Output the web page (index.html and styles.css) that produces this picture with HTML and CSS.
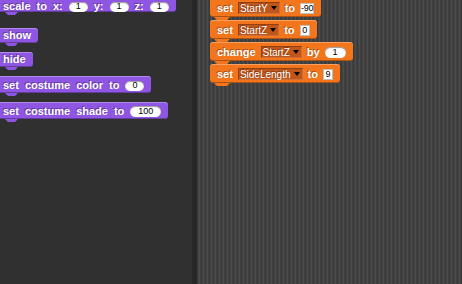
FILE: index.html
```html
<!DOCTYPE html>
<html lang="en">
<head>
  <meta charset="UTF-8" />
  <title>Snap! - Looks and Variables</title>
  <meta name="viewport" content="width=device-width, initial-scale=1.0" />
  <link rel="stylesheet" href="styles.css">
</head>
<body>
  <div class="editor">
    <!-- Palette (Looks) -->
    <div class="palette">
      <div class="block looks tall first">
        <span>scale</span><span>to</span><span>x:</span><span class="num">1</span>
        <span>y:</span><span class="num">1</span>
        <span>z:</span><span class="num">1</span>
      </div>
      <div class="block looks spaced"><span>show</span></div>
      <div class="block looks"><span>hide</span></div>
      <div class="block looks tall">
        <span>set</span><span>costume</span><span>color</span><span>to</span><span class="num">0</span>
      </div>
      <div class="block looks tall">
        <span>set</span><span>costume</span><span>shade</span><span>to</span><span class="num wide">100</span>
      </div>
    </div>

    <div class="divider"></div>

    <!-- Scripting area -->
    <div class="scripts">
      <div class="script">
        <div class="block vars">
          <span>set</span><span class="slot">StartY<i class="arrow"></i></span>
          <span>to</span><span class="box">-90</span>
        </div>
        <div class="block vars">
          <span>set</span><span class="slot">StartZ<i class="arrow"></i></span>
          <span>to</span><span class="box">0</span>
        </div>
        <div class="block vars">
          <span>change</span><span class="slot">StartZ<i class="arrow"></i></span>
          <span>by</span><span class="num wide">1</span>
        </div>
        <div class="block vars">
          <span>set</span><span class="slot">SideLength<i class="arrow"></i></span>
          <span>to</span><span class="box">9</span>
        </div>
      </div>
    </div>
  </div>
</body>
</html>
```

FILE: styles.css
```css
:root {
  --palette: #303030;
  --looks: #8f56e3;
  --vars: #f3761d;
  --vars-slot: #c0561a;
}

body {
  margin: 0;
  font-family: 'Liberation Sans', Arial, sans-serif;
  background-color: var(--palette);
}

.editor {
  display: flex;
  width: 462px;
  height: 284px;
  overflow: hidden;
}

.palette {
  width: 192px;
  flex: none;
  display: flex;
  flex-direction: column;
  align-items: flex-start;
  gap: 9px;
  background-color: var(--palette);
}

.divider {
  width: 5px;
  flex: none;
  background-color: #262626;
}

.scripts {
  flex: 1;
  background: repeating-linear-gradient(90deg,
    #393939 0 1px, #444444 1px 2px, #4b4b4b 2px 3px, #404040 3px 4px);
}

.script {
  display: flex;
  flex-direction: column;
  align-items: flex-start;
  gap: 3px;
  margin: -2px 0 0 13px;
}

/* command blocks */
.block {
  position: relative;
  display: flex;
  align-items: center;
  gap: 6px;
  height: 15px;
  box-sizing: border-box;
  padding: 2px 7px 2px 7px;
  border-radius: 3px;
  color: white;
  font-size: 11px;
  font-weight: bold;
  line-height: 11px;
  text-shadow: -1px -1px 0 rgba(0, 0, 0, 0.35);
  box-shadow: inset 0 1px rgba(255, 255, 255, 0.3), inset 0 -1px rgba(0, 0, 0, 0.3);
}

.block::after {
  content: '';
  position: absolute;
  top: 100%;
  left: 9px;
  width: 13px;
  height: 3px;
  background-color: inherit;
  clip-path: polygon(0 0, 100% 0, calc(100% - 3px) 100%, 3px 100%);
}

.looks {
  background-color: var(--looks);
  margin-left: -4px;
}

.looks.tall {
  height: 17px;
  padding-top: 4px;
}

.looks.first {
  margin-top: -5px;
  padding-top: 6px;
  padding-bottom: 0;
}

.looks.spaced {
  margin-top: 7px;
}

.vars {
  background-color: var(--vars);
  height: 19px;
  padding-top: 4px;
  padding-bottom: 3px;
  gap: 5px;
}

.vars::after {
  left: 4px;
  width: 16px;
}

/* inputs */
.num {
  display: inline-flex;
  align-items: center;
  justify-content: center;
  height: 10px;
  padding: 0 7px;
  min-width: 5px;
  border-radius: 6px;
  background-color: white;
  color: black;
  font-size: 9px;
  font-weight: normal;
  text-shadow: none;
  box-shadow: inset 0 1px 1px rgba(0, 0, 0, 0.4);
}

.num.wide {
  padding: 0 8px;
  height: 11px;
}

.box {
  display: inline-flex;
  align-items: center;
  justify-content: center;
  height: 11px;
  min-width: 8px;
  padding: 0 1px;
  background-color: white;
  color: black;
  font-size: 9px;
  font-weight: normal;
  letter-spacing: -0.3px;
  text-shadow: none;
  box-shadow: inset 0 0 0 1px rgba(0, 0, 0, 0.25);
}

.slot {
  display: inline-flex;
  align-items: center;
  gap: 3px;
  height: 12px;
  padding: 0 2px;
  background-color: var(--vars-slot);
  font-size: 10px;
  font-weight: normal;
  box-shadow: inset 1px 1px rgba(0, 0, 0, 0.25), inset -1px -1px rgba(255, 255, 255, 0.15);
}

.arrow {
  width: 0;
  height: 0;
  margin-right: 1px;
  border-left: 3.5px solid transparent;
  border-right: 3.5px solid transparent;
  border-top: 4px solid black;
}
```
